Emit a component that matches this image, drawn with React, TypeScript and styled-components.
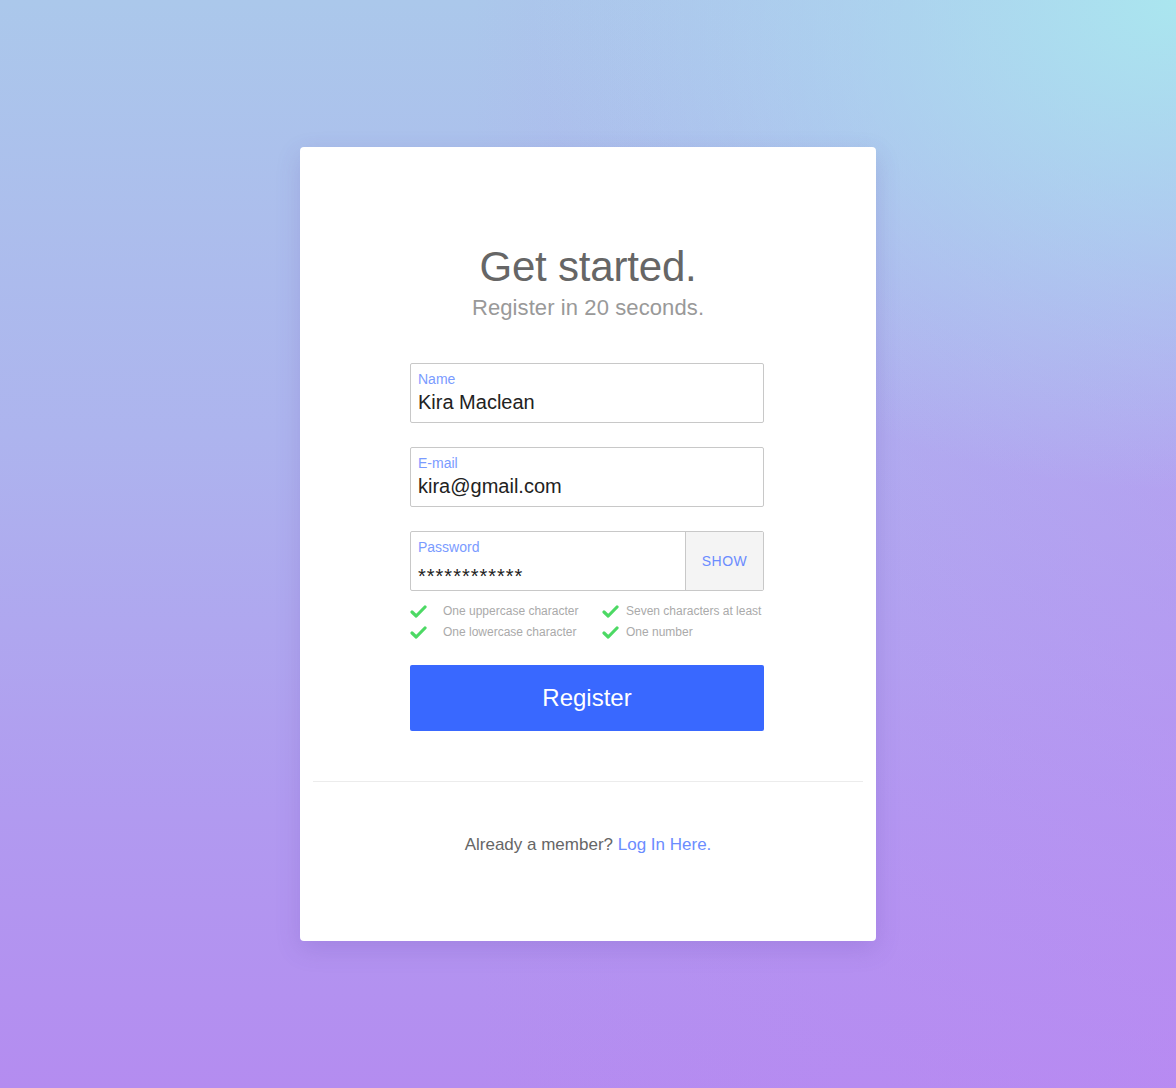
import styled, { createGlobalStyle } from "styled-components"

const GlobalStyle = createGlobalStyle`
  html, body {
    margin: 0;
    padding: 0;
  }
  body {
    font-family: "Liberation Sans", Arial, sans-serif;
  }
`

const rules = [
  "One uppercase character",
  "Seven characters at least",
  "One lowercase character",
  "One number",
]

function Check() {
  return (
    <svg width="17" height="13" viewBox="0 0 17 13">
      <path d="M2 7 L6.2 11 L15 2" fill="none" stroke="#4cd964" strokeWidth="3.2" strokeLinecap="round" strokeLinejoin="round" />
    </svg>
  )
}

export default function App() {
  return (
    <>
      <GlobalStyle />
      <Page>
        <Card>
          <Top>
            <Title>Get started.</Title>
            <Subtitle>Register in 20 seconds.</Subtitle>

            <Form>
              <Field>
                <FieldBody>
                  <Label>Name</Label>
                  <Value>Kira Maclean</Value>
                </FieldBody>
              </Field>
              <Field>
                <FieldBody>
                  <Label>E-mail</Label>
                  <Value>kira@gmail.com</Value>
                </FieldBody>
              </Field>
              <Field>
                <FieldBody>
                  <Label>Password</Label>
                  <Value $secret>************</Value>
                </FieldBody>
                <ShowButton>SHOW</ShowButton>
              </Field>

              <Rules>
                {rules.map((r, i) => (
                  <Rule key={r} $first={i % 2 === 0}>
                    <Check />
                    <span>{r}</span>
                  </Rule>
                ))}
              </Rules>

              <Register>Register</Register>
            </Form>
          </Top>

          <Divider />

          <Footer>
            Already a member? <Link>Log In Here.</Link>
          </Footer>
        </Card>
      </Page>
    </>
  )
}

const Page = styled.div`
  min-height: 1088px;
  display: flex;
  justify-content: center;
  align-items: flex-start;
  padding-top: 147px;
  box-sizing: border-box;
  background:
    radial-gradient(ellipse 55% 45% at 100% 0%, rgba(170, 230, 239, 1) 0%, rgba(170, 230, 239, 0) 100%),
    linear-gradient(90deg, rgba(185, 138, 242, 0) 40%, rgba(190, 135, 245, 0.35) 100%),
    linear-gradient(180deg, #abc8eb 0%, #adb4ee 40%, #b19af0 75%, #b48cf0 100%);
`

const Card = styled.div`
  width: 576px;
  height: 794px;
  background: #fff;
  border-radius: 4px;
  box-shadow: 0 8px 24px rgba(90, 60, 160, 0.18);
  display: flex;
  flex-direction: column;
  align-items: center;
  padding: 0 13px;
  box-sizing: border-box;
`

const Top = styled.div`
  display: flex;
  flex-direction: column;
  align-items: center;
  padding-top: 96px;
  width: 100%;
`

const Title = styled.h1`
  margin: 0;
  font-size: 42px;
  font-weight: 400;
  color: #666;
  line-height: 48px;
  letter-spacing: -0.2px;
`

const Subtitle = styled.div`
  margin-top: 3px;
  font-size: 22px;
  color: #999;
  line-height: 28px;
  letter-spacing: 0.1px;
`

const Form = styled.div`
  width: 354px;
  margin-top: 41px;
  margin-right: 2px;
  display: flex;
  flex-direction: column;
`

const Field = styled.div`
  display: flex;
  height: 60px;
  border: 1px solid #c8c8c8;
  border-radius: 2px;
  box-sizing: border-box;
  margin-bottom: 24px;
  overflow: hidden;
`

const FieldBody = styled.div`
  flex: 1;
  padding: 7px 7px 0;
`

const Label = styled.div`
  font-size: 14px;
  color: #7a9bff;
  line-height: 16px;
`

const Value = styled.div<{ $secret?: boolean }>`
  font-size: 20px;
  color: #222;
  line-height: 26px;
  margin-top: ${(p) => (p.$secret ? "8px" : "2px")};
  letter-spacing: ${(p) => (p.$secret ? "1px" : "0")};
`

const ShowButton = styled.div`
  width: 77px;
  background: #f4f4f4;
  border-left: 1px solid #c8c8c8;
  display: flex;
  align-items: center;
  justify-content: center;
  font-size: 14px;
  color: #6b8cff;
  letter-spacing: 0.5px;
`

const Rules = styled.div`
  display: grid;
  grid-template-columns: 192px 1fr;
  row-gap: 4px;
  margin-top: -12px;
`

const Rule = styled.div<{ $first?: boolean }>`
  display: flex;
  align-items: center;
  gap: ${(p) => (p.$first ? "16px" : "7px")};
  font-size: 12px;
  color: #aaa;
  line-height: 17px;
  white-space: nowrap;
  svg {
    flex-shrink: 0;
  }
`

const Register = styled.button`
  margin-top: 24px;
  height: 66px;
  border: none;
  border-radius: 2px;
  background: #3968ff;
  color: #fff;
  font-family: "Liberation Sans", Arial, sans-serif;
  font-size: 24px;
`

const Divider = styled.div`
  width: 100%;
  height: 1px;
  background: #ececec;
  margin-top: 50px;
`

const Footer = styled.div`
  margin-top: 53px;
  font-size: 17px;
  color: #666;
`

const Link = styled.span`
  color: #6b8cff;
`
